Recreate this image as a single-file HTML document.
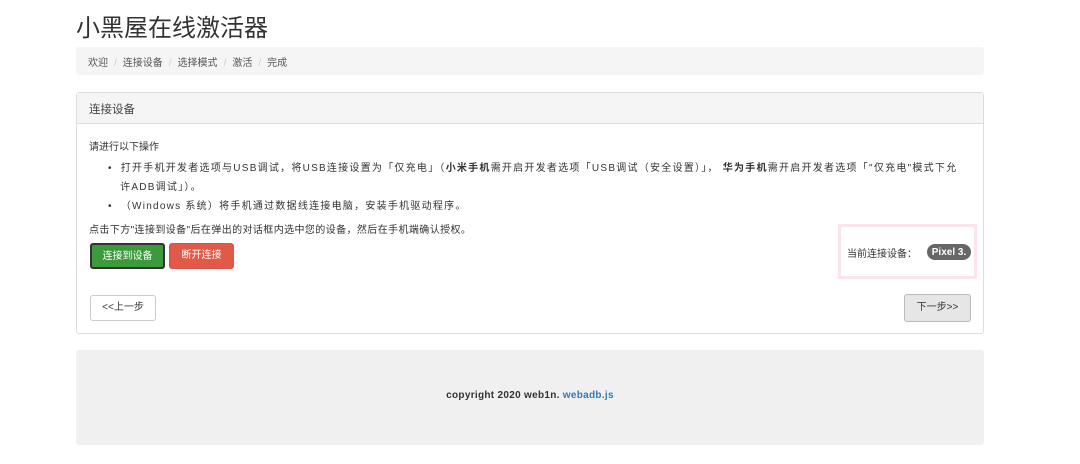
<!DOCTYPE html><html><head><meta charset="utf-8"><style>
*{box-sizing:border-box}body{margin:0;background:#fff;font-family:"Liberation Sans","Noto Sans CJK SC",sans-serif;color:#333;width:1080px;height:464px;overflow:hidden;position:relative;font-size:10px}
.a{position:absolute}
h1{position:absolute;left:76px;top:8px;margin:0;font-size:24px;font-weight:400;color:#333}
.bc{left:76px;top:47px;width:908px;height:28px;background:#f5f5f5;border-radius:3px;padding:7px 12px;font-size:10px;color:#555}
.bc span{color:#ccc;margin:0 6px}
.panel{left:76px;top:92px;width:908px;height:242px;border:1px solid #ddd;border-radius:3px}
.ph{height:31px;background:#f5f5f5;border-bottom:1px solid #ddd;padding:8px 12px;font-size:11.5px;color:#444}
.btn{position:absolute;height:26px;border-radius:3px;font-size:10px;line-height:24px;text-align:center}
</style></head><body>
<h1>小黑屋在线激活器</h1>
<div class="a bc">欢迎<span>/</span>连接设备<span>/</span>选择模式<span>/</span>激活<span>/</span>完成</div>
<div class="a panel"><div class="ph">连接设备</div></div>
<div class="a" style="left:89px;top:138px">请进行以下操作</div>
<div class="a" style="left:108px;top:159px;line-height:19px;width:880px;letter-spacing:1.25px">• &nbsp;打开手机开发者选项与USB调试，将USB连接设置为「仅充电」（<b>小米手机</b>需开启开发者选项「USB调试（安全设置）」， <b>华为手机</b>需开启开发者选项「"仅充电"模式下允<br>&nbsp;&nbsp;&nbsp;许ADB调试」）。<br>• &nbsp;（Windows 系统）将手机通过数据线连接电脑，安装手机驱动程序。</div>
<div class="a" style="left:89px;top:221px;letter-spacing:0.4px">点击下方"连接到设备"后在弹出的对话框内选中您的设备，然后在手机端确认授权。</div>
<div class="btn" style="left:90px;top:243px;width:75px;background:#3c9a3c;color:#fff;border:2px solid #333">连接到设备</div>
<div class="btn" style="left:169px;top:243px;width:65px;background:#e05a47;color:#fff;border:1px solid #d9534f">断开连接</div>
<div class="a" style="left:838px;top:224px;width:139px;height:55px;border:3px solid #fce4ec"></div>
<div class="a" style="left:847px;top:245px">当前连接设备：</div>
<div class="a" style="left:927px;top:244px;width:44px;height:16px;border-radius:8px;background:#666;color:#fff;font-weight:bold;text-align:center;line-height:17px;font-size:10px">Pixel 3.</div>
<div class="btn" style="left:90px;top:295px;width:66px;border:1px solid #ccc;background:#fff">&lt;&lt;上一步</div>
<div class="btn" style="left:904px;top:294px;width:67px;height:28px;border:1px solid #bbb;background:#e6e6e6;line-height:26px">下一步&gt;&gt;</div>
<div class="a" style="left:76px;top:350px;width:908px;height:95px;background:#f0f0f0;border-radius:3px;text-align:center;line-height:92px;font-size:10px;color:#333;font-weight:bold;letter-spacing:0.3px">copyright 2020 web1n. <span style="color:#337ab7">webadb.js</span></div>
</body></html>
